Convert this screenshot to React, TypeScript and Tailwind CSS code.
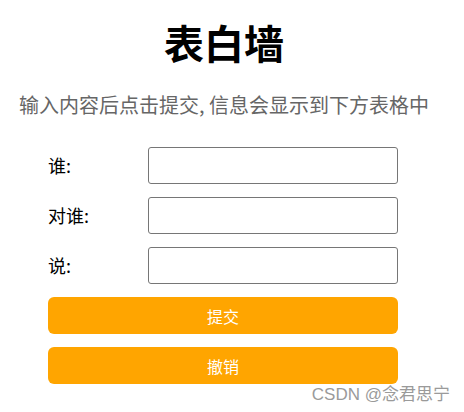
import React from 'react';

const FONT = { fontFamily: '"Microsoft YaHei", "Noto Sans CJK SC", "Noto Sans", sans-serif' };

const rows = ['谁:', '对谁:', '说:'];

export default function App() {
  return (
    <div className="relative w-[464px] h-[412px] bg-white overflow-hidden" style={FONT}>
      <div className="w-[448px] text-center">
        <h1 className="pt-[15px] text-[40px] leading-[54px] font-bold text-black">表白墙</h1>
        <p className="mt-[22px] text-[20px] leading-[28px] text-[#666666]">输入内容后点击提交, 信息会显示到下方表格中</p>
      </div>

      <div className="ml-[48px] mt-[28px] w-[350px] flex flex-col">
        {rows.map((label) => (
          <div key={label} className="flex items-center h-[37px] mb-[13px]">
            <span className="w-[100px] text-[18px] text-black">{label}</span>
            <input className="w-[250px] h-[37px] border border-[#767676] rounded-[3px] outline-none" />
          </div>
        ))}
        <button className="h-[37px] rounded-[6px] bg-[#ffa500] text-white text-[16px]">提交</button>
        <button className="mt-[13px] h-[37px] rounded-[6px] bg-[#ffa500] text-white text-[16px]">撤销</button>
      </div>

      <div className="absolute right-[14px] top-[383px] text-[17px] leading-[20px] text-[#9a9a9a]">
        <span style={{ fontFamily: '"Liberation Sans", Arial, sans-serif' }}>CSDN @</span>念君思宁
      </div>
    </div>
  );
}
